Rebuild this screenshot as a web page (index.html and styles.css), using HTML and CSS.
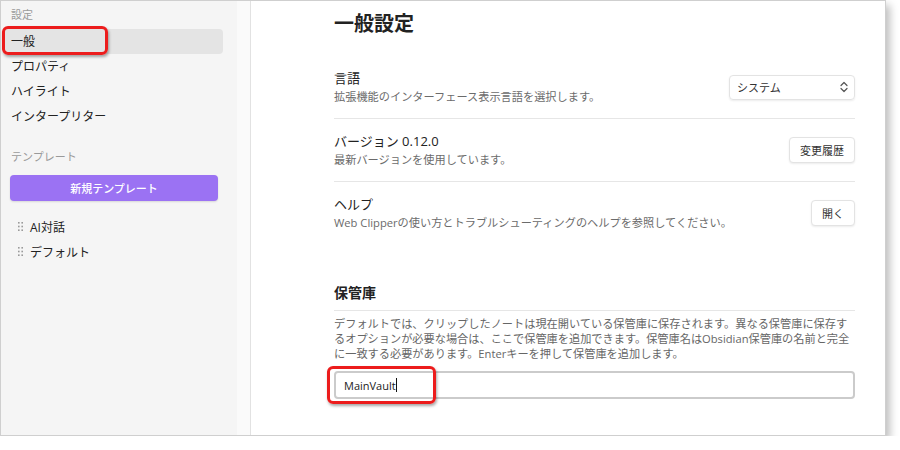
FILE: index.html
```html
<!DOCTYPE html>
<html lang="ja">
<head>
  <meta charset="UTF-8">
  <meta name="viewport" content="width=device-width, initial-scale=1.0">
  <title>Web Clipper 設定</title>
  <link rel="stylesheet" href="styles.css">
</head>
<body>
  <div class="window">
    <div class="sidebar">
      <div class="side-heading">設定</div>
      <ul class="side-menu">
        <li class="active">一般<span class="mark mark-nav"></span></li>
        <li>プロパティ</li>
        <li>ハイライト</li>
        <li>インタープリター</li>
      </ul>
      <div class="side-heading templates-heading">テンプレート</div>
      <button class="new-template">新規テンプレート</button>
      <ul class="template-list">
        <li>
          <svg class="handle" width="5" height="9" viewBox="0 0 5 9"><g fill="#9a9a9a"><rect x="0" y="0" width="1.6" height="1.6"/><rect x="3.4" y="0" width="1.6" height="1.6"/><rect x="0" y="3.7" width="1.6" height="1.6"/><rect x="3.4" y="3.7" width="1.6" height="1.6"/><rect x="0" y="7.4" width="1.6" height="1.6"/><rect x="3.4" y="7.4" width="1.6" height="1.6"/></g></svg>
          AI対話
        </li>
        <li>
          <svg class="handle" width="5" height="9" viewBox="0 0 5 9"><g fill="#9a9a9a"><rect x="0" y="0" width="1.6" height="1.6"/><rect x="3.4" y="0" width="1.6" height="1.6"/><rect x="0" y="3.7" width="1.6" height="1.6"/><rect x="3.4" y="3.7" width="1.6" height="1.6"/><rect x="0" y="7.4" width="1.6" height="1.6"/><rect x="3.4" y="7.4" width="1.6" height="1.6"/></g></svg>
          デフォルト
        </li>
      </ul>
    </div>
    <div class="gutter"></div>
    <div class="main">
      <h1 class="page-title">一般設定</h1>

      <div class="setting-row">
        <div>
          <div class="label">言語</div>
          <div class="desc">拡張機能のインターフェース表示言語を選択します。</div>
        </div>
        <div class="select">
          <span>システム</span>
          <svg width="8" height="12" viewBox="0 0 8 12"><path d="M1 4.5 L4 1.5 L7 4.5 M1 7.5 L4 10.5 L7 7.5" fill="none" stroke="#555" stroke-width="1.2" stroke-linecap="round" stroke-linejoin="round"/></svg>
        </div>
      </div>

      <div class="setting-row">
        <div>
          <div class="label">バージョン 0.12.0</div>
          <div class="desc">最新バージョンを使用しています。</div>
        </div>
        <button class="btn">変更履歴</button>
      </div>

      <div class="setting-row">
        <div>
          <div class="label">ヘルプ</div>
          <div class="desc">Web Clipperの使い方とトラブルシューティングのヘルプを参照してください。</div>
        </div>
        <button class="btn">開く</button>
      </div>

      <h2 class="section-title">保管庫</h2>
      <p class="section-desc">デフォルトでは、クリップしたノートは現在開いている保管庫に保存されます。異なる保管庫に保存するオプションが必要な場合は、ここで保管庫を追加できます。保管庫名はObsidian保管庫の名前と完全に一致する必要があります。Enterキーを押して保管庫を追加します。</p>
      <div class="vault-input">MainVault<span class="caret"></span><span class="mark mark-vault"></span></div>
    </div>
  </div>
</body>
</html>
```

FILE: styles.css
```css
body {
  margin: 0;
  background: #fff;
  font-family: "Open Sans", "Noto Sans CJK JP", sans-serif;
  color: #222;
}
.window {
  width: 886px;
  height: 436px;
  box-sizing: border-box;
  border: 1px solid #cfcfcf;
  display: flex;
  box-shadow: 4px 5px 8px rgba(0,0,0,0.25);
}
.sidebar {
  width: 236px;
  box-sizing: border-box;
  background: #f5f5f5;
  padding: 6px 14px 0 2px;
}
.side-heading {
  font-size: 11px;
  line-height: 16px;
  color: #9a9a9a;
  padding-left: 8px;
}
.templates-heading {
  margin-top: 20px;
}
.side-menu, .template-list {
  list-style: none;
  margin: 0;
  padding: 0;
}
.side-menu {
  margin-top: 6px;
}
.side-menu li {
  position: relative;
  height: 25px;
  line-height: 25px;
  padding-left: 8px;
  font-size: 12px;
  border-radius: 4px;
}
.side-menu li.active {
  background: #e4e4e4;
}
.new-template {
  display: block;
  width: 208px;
  height: 26px;
  margin: 10px 0 0 7px;
  border: none;
  border-radius: 4px;
  background: #9b72f3;
  color: #fff;
  font-family: inherit;
  font-size: 11px;
  font-weight: 500;
  box-shadow: 0 1px 2px rgba(0,0,0,0.12);
}
.template-list {
  margin-top: 13px;
}
.template-list li {
  display: flex;
  align-items: center;
  height: 25px;
  padding-left: 15px;
  font-size: 12px;
}
.handle {
  margin-right: 7px;
}
.gutter {
  width: 13px;
  background: #fafafa;
  border-right: 1px solid #e2e2e2;
}
.main {
  flex: 1;
  padding: 9px 30px 0 83px;
}
.page-title {
  margin: 0 0 18px;
  font-size: 20px;
  line-height: 28px;
  font-weight: bold;
}
.setting-row {
  display: flex;
  align-items: center;
  justify-content: space-between;
  padding: 12px 0;
  border-bottom: 1px solid #e6e6e6;
}
.setting-row:nth-of-type(3) {
  border-bottom: none;
}
.label {
  font-size: 13px;
  line-height: 20px;
}
.desc {
  font-size: 11.2px;
  line-height: 18px;
  color: #6b6b6b;
}
.select {
  width: 126px;
  height: 25px;
  box-sizing: border-box;
  display: flex;
  align-items: center;
  justify-content: space-between;
  padding: 0 6px 0 7px;
  border: 1px solid #e3e3e3;
  border-radius: 4px;
  box-shadow: 0 1px 2px rgba(0,0,0,0.08);
  font-size: 11px;
  color: #333;
}
.btn {
  height: 26px;
  padding: 0 10px;
  background: #fff;
  border: 1px solid #e3e3e3;
  border-radius: 4px;
  box-shadow: 0 1px 2px rgba(0,0,0,0.08);
  font-family: inherit;
  font-size: 11px;
  color: #333;
}
.section-title {
  margin: 39px 0 0;
  padding-bottom: 7px;
  border-bottom: 1px solid #e6e6e6;
  font-size: 14px;
  line-height: 20px;
  font-weight: bold;
}
.section-desc {
  margin: 5px 0 0;
  font-size: 11.2px;
  line-height: 15px;
  color: #666;
}
.vault-input {
  position: relative;
  display: flex;
  align-items: center;
  height: 28px;
  box-sizing: border-box;
  margin-top: 10px;
  padding: 0 8px;
  border: 2px solid #cbcbcb;
  border-radius: 4px;
  font-size: 11px;
  color: #222;
}
.caret {
  display: inline-block;
  width: 1px;
  height: 14px;
  background: #111;
}
.mark {
  position: absolute;
  box-sizing: border-box;
  border: 3px solid #ec1c1c;
  border-radius: 6px;
  box-shadow: 1px 2px 3px rgba(0,0,0,0.35);
}
.mark-nav {
  left: -1px;
  top: -3px;
  width: 106px;
  height: 29px;
}
.mark-vault {
  left: -9px;
  top: -7px;
  width: 109px;
  height: 38px;
}
```
